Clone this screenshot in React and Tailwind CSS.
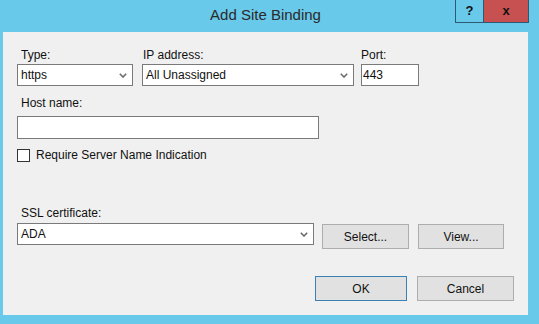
import React from 'react';

const font = { fontFamily: '"Liberation Sans", Arial, sans-serif' };

function Chevron() {
  return (
    <svg width="8" height="5" viewBox="0 0 8 5" className="shrink-0">
      <polyline points="0.8,0.8 4,4 7.2,0.8" fill="none" stroke="#6b6b6b" strokeWidth="1.6" />
    </svg>
  );
}

function Select({ value, className }) {
  return (
    <div className={`flex items-center justify-between h-[22px] bg-white border border-[#7a7a7a] pl-[3px] pr-[5px] text-[12px] text-[#111] ${className}`}>
      <span>{value}</span>
      <Chevron />
    </div>
  );
}

function Button({ children, className }) {
  return (
    <div className={`flex items-center justify-center bg-[#e1e1e1] border text-[12px] text-[#111] ${className}`}>
      {children}
    </div>
  );
}

export default function App() {
  return (
    <div style={font} className="w-[539px] h-[324px] bg-[#68c9ea] pl-[3px] pr-[11px] pb-[9px] flex flex-col">
      {/* Title bar */}
      <div className="relative h-[32px] shrink-0 flex items-center justify-center">
        <span className="text-[15px] text-[#2a2a2a] -mt-[2px]">Add Site Binding</span>
        <div className="absolute top-0 right-[-1px] flex h-[23px]">
          <div className="w-[28px] h-full border-l border-b border-[#2d5a73] flex items-center justify-center text-[13px] font-bold text-[#111]">?</div>
          <div className="w-[46px] h-full bg-[#c75050] border-l border-b border-r border-[#2d5a73] flex items-center justify-center text-[13px] font-bold text-[#111]">x</div>
        </div>
      </div>

      {/* Content */}
      <div className="flex-1 bg-[#f0f0f0] pl-[14px] pt-[15px] text-[12px] text-[#111]">
        <div className="flex">
          <div className="w-[116px]">
            <div className="h-[16px] leading-[16px] pl-[4px]">Type:</div>
            <Select value="https" className="mt-[1px]" />
          </div>
          <div className="w-[212px] ml-[9px]">
            <div className="h-[16px] leading-[16px] pl-[1px]">IP address:</div>
            <Select value="All Unassigned" className="mt-[1px]" />
          </div>
          <div className="w-[58px] ml-[7px]">
            <div className="h-[16px] leading-[16px]">Port:</div>
            <div className="mt-[1px] h-[22px] bg-white border border-[#7a7a7a] pl-[1px] flex items-center">443</div>
          </div>
        </div>

        <div className="mt-[9px] h-[16px] leading-[16px] pl-[4px]">Host name:</div>
        <div className="mt-[5px] w-[302px] h-[23px] bg-white border border-[#7a7a7a]" />

        <div className="mt-[8px] h-[16px] flex items-center">
          <div className="w-[13px] h-[13px] bg-white border border-[#333]" />
          <span className="ml-[6px] leading-[16px]">Require Server Name Indication</span>
        </div>

        <div className="mt-[42px] h-[16px] leading-[16px] pl-[4px]">SSL certificate:</div>
        <div className="mt-[2px] flex items-start">
          <Select value="ADA" className="w-[297px]" />
          <Button className="ml-[8px] mt-[1px] w-[87px] h-[25px] border-[#adadad]">Select...</Button>
          <Button className="ml-[9px] mt-[1px] w-[86px] h-[25px] border-[#adadad]">View...</Button>
        </div>

        <div className="mt-[27px] flex pl-[298px]">
          <Button className="w-[92px] h-[25px] border-[#3c7fb1]">OK</Button>
          <Button className="ml-[10px] w-[97px] h-[25px] border-[#adadad]">Cancel</Button>
        </div>
      </div>
    </div>
  );
}
